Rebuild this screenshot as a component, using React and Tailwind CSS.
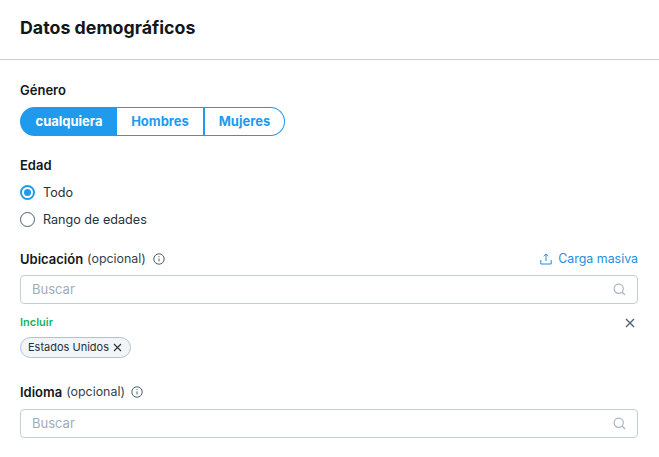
import React from "react";

function InfoIcon() {
    return (
        <svg width="12" height="12" viewBox="0 0 12 12" fill="none" stroke="#4a5f70" strokeWidth="1">
            <circle cx="6" cy="6" r="5.2" />
            <path d="M6 5.4v3" />
            <circle cx="6" cy="3.6" r="0.6" fill="#4a5f70" stroke="none" />
        </svg>
    );
}

function SearchBox() {
    return (
        <div className="flex h-[29px] items-center justify-between rounded-[4px] border border-[#c3ced8] pl-[11px] pr-[11px]">
            <span className="text-[13px] text-[#9dadbb]">Buscar</span>
            <svg width="13" height="13" viewBox="0 0 13 13" fill="none" stroke="#a9b6c2" strokeWidth="1.2">
                <circle cx="5.7" cy="5.7" r="4.6" />
                <path d="M9 9l3 3" />
            </svg>
        </div>
    );
}

export default function App() {
    return (
        <div className="h-[457px] w-[659px] overflow-hidden bg-white font-['Inter',sans-serif] text-[#14171a]">
            <div className="flex h-[60px] items-center border-b border-[#c8d1d9] px-5 pb-[2px]">
                <h1 className="text-[17.8px] font-bold">Datos demográficos</h1>
            </div>

            <div className="px-[21px] pr-[21px] pt-[22px]">
                <h2 className="ml-[-1px] text-[13px] leading-4 font-semibold">Género</h2>
                <div className="ml-[-1px] mt-[9px] flex h-[29px] w-[265px] text-[13px] font-bold text-[#1d9bf0]">
                    <div className="flex w-[97px] items-center justify-center rounded-l-full bg-[#1f9aed] pl-[1px] text-white">cualquiera</div>
                    <div className="flex w-[88px] items-center justify-center border-y border-r-2 border-[#1f9aed]">Hombres</div>
                    <div className="flex flex-1 items-center justify-center rounded-r-full border-y border-r border-[#1f9aed]">Mujeres</div>
                </div>

                <h2 className="ml-[-1px] mt-[21px] text-[13px] leading-4 font-semibold">Edad</h2>
                <div className="ml-[-1px] mt-[11px] flex items-center gap-2 text-[12.6px] text-[#26323c]">
                    <span className="flex h-[15px] w-[15px] items-center justify-center rounded-full border-2 border-[#1f9aed]">
                        <span className="h-[7px] w-[7px] rounded-full bg-[#1f9aed]"></span>
                    </span>
                    <span className="pt-[2px] leading-[14px]">Todo</span>
                </div>
                <div className="ml-[-1px] mt-[11px] flex items-center gap-2 text-[12.6px] text-[#26323c]">
                    <span className="h-[15px] w-[15px] rounded-full border border-[#4a5f70]"></span>
                    <span className="pt-[2px] leading-[14px]">Rango de edades</span>
                </div>

                <div className="ml-[-1px] mt-[23px] flex items-center justify-between">
                    <div className="flex items-center text-[13px] leading-4">
                        <span className="font-semibold">Ubicación</span>
                        <span className="ml-1 mr-[7px] text-[12.4px] text-[#33424e]">(opcional)</span>
                        <InfoIcon />
                    </div>
                    <div className="mt-[1px] flex items-center gap-[6px] text-[12.4px] leading-4 text-[#1f8ee0]">
                        <svg width="12" height="12" viewBox="0 0 12 12" fill="none" stroke="#1f8ee0" strokeWidth="1">
                            <path d="M6 8V1M3.6 3.2L6 .9l2.4 2.3M.8 7v4h10.4V7" />
                        </svg>
                        Carga masiva
                    </div>
                </div>
                <div className="ml-[-1px] mt-[8px]"><SearchBox /></div>

                <div className="ml-[-1px] mt-[10px] flex items-center justify-between pr-[3px]">
                    <span className="text-[11px] leading-4 font-semibold text-[#17b45c]">Incluir</span>
                    <svg className="mt-[2px]" width="10" height="10" viewBox="0 0 10 10" stroke="#4a5f70" strokeWidth="1.3">
                        <path d="M1 1l8 8M9 1L1 9" />
                    </svg>
                </div>
                <div className="ml-[-1px] mt-[7px] flex h-[21px] w-[111px] items-center justify-between rounded-full border border-[#b5c2cd] bg-[#f2f5f7] pl-[7px] pr-[8px] text-[11px] text-[#26323c]">
                    Estados Unidos
                    <svg className="mt-[-1px]" width="9" height="9" viewBox="0 0 9 9" stroke="#26323c" strokeWidth="1.1">
                        <path d="M1 1l7 7M8 1L1 8" />
                    </svg>
                </div>

                <div className="ml-[-1px] mt-[26px] flex items-center text-[13px] leading-4">
                    <span className="font-semibold">Idioma</span>
                    <span className="ml-1 mr-[6px] text-[12.4px] text-[#33424e]">(opcional)</span>
                    <InfoIcon />
                </div>
                <div className="ml-[-1px] mt-[9px]"><SearchBox /></div>
            </div>
        </div>
    );
}
